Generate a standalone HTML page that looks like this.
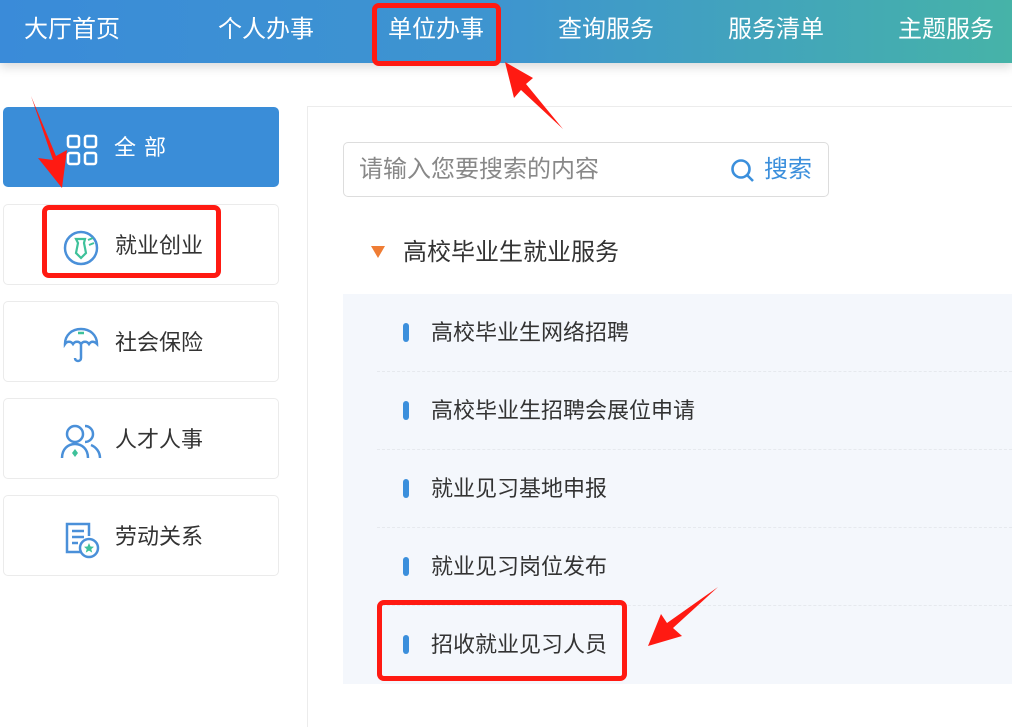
<!DOCTYPE html>
<html><head><meta charset="utf-8"><style>
body{margin:0;width:1012px;height:703px;overflow:hidden;background:#fff;font-family:"Liberation Sans","Noto Sans CJK SC",sans-serif;position:relative}
.hdr{position:absolute;left:0;top:0;width:1012px;height:63px;background:linear-gradient(90deg,#3a8bd9 0%,#3e95cf 50%,#46b3a8 100%);box-shadow:0 4px 10px rgba(0,0,0,.15)}
.nav{position:absolute;top:14px;color:#fff;font-size:24px;line-height:32px}
.card{position:absolute;left:3px;width:276px;height:81px;border:1px solid #ebebeb;border-radius:5px;box-sizing:border-box}
.card span{position:absolute;left:111px;top:26px;font-size:22px;color:#333;line-height:30px}
.card svg{position:absolute;left:58px;top:22px}
.all{background:#3a8dd8;border:none;top:107px;height:80px}
.all span{color:#fff;letter-spacing:8px}
.panel{position:absolute;left:307px;top:106px;width:720px;height:620px;border-left:1px solid #ececec;border-top:1px solid #ececec}
.search{position:absolute;left:343px;top:142px;width:486px;height:55px;border:1px solid #ddd;border-radius:5px;box-sizing:border-box}
.list{position:absolute;left:343px;top:294px;width:680px;height:390px;background:#f4f7fc}
.row{position:absolute;left:34px;width:650px;height:78px;border-bottom:1px dashed #e6e9ee;box-sizing:border-box}
.row i{position:absolute;left:26px;top:29px;width:6px;height:19px;background:#3b8fdc;border-radius:3px}
.row b{position:absolute;left:54px;top:24px;font-weight:normal;font-size:22px;color:#333;line-height:30px}
.red{position:absolute;border:5px solid #ff1a12;border-radius:7px;box-sizing:border-box}
</style></head><body>
<div class="hdr"></div>
<div class="nav" style="left:24px">大厅首页</div>
<div class="nav" style="left:218px">个人办事</div>
<div class="nav" style="left:388px">单位办事</div>
<div class="nav" style="left:558px">查询服务</div>
<div class="nav" style="left:728px">服务清单</div>
<div class="nav" style="left:898px">主题服务</div>

<div class="card all"><svg width="36" height="36" viewBox="0 0 36 36" style="left:62px;top:26px" fill="none" stroke="#fff" stroke-width="2.5"><rect x="3" y="3" width="11" height="11" rx="2"/><rect x="20" y="3" width="11" height="11" rx="2"/><rect x="3" y="20" width="11" height="11" rx="2"/><rect x="20" y="20" width="11" height="11" rx="2"/></svg><span>全部</span></div>
<div class="card" style="top:204px"><svg width="38" height="38" viewBox="0 0 38 38" style="top:24px"><circle cx="19" cy="19" r="16" fill="none" stroke="#4a90d9" stroke-width="2.5"/><path d="M14 10h9l-1 4 2 10-5 5-5-5 2-10z" fill="none" stroke="#3ec19a" stroke-width="2.2"/><path d="M26 11l5-2M27 16l5-2" stroke="#3ec19a" stroke-width="2"/></svg><span>就业创业</span></div>
<div class="card" style="top:301px"><svg width="38" height="40" viewBox="0 0 38 40" fill="none" stroke="#4a90d9" stroke-width="2.5" style="top:24px"><path d="M3 18C3 9 10 3 19 3s16 6 16 15c-3-3-6-3-8 0-2-3-6-3-8 0-2-3-6-3-8 0-2-3-6-3-8 0z"/><path d="M19 18v14c0 4-6 4-6 0"/><path d="M16 7h6" stroke="#3ec19a"/></svg><span>社会保险</span></div>
<div class="card" style="top:398px"><svg width="42" height="38" viewBox="0 0 42 38" fill="none" stroke="#4a90d9" stroke-width="2.5" style="left:56px;top:24px"><circle cx="15" cy="11" r="8"/><path d="M2 35c0-9 6-14 13-14s13 5 13 14"/><path d="M25 3a8 8 0 0 1 0 16M31 22c5 2 9 7 9 13"/><path d="M15 26l3 4-3 4-3-4z" fill="#3ec19a" stroke="none"/></svg><span>人才人事</span></div>
<div class="card" style="top:495px"><svg width="40" height="40" viewBox="0 0 40 40" fill="none" stroke="#4a90d9" stroke-width="2.5" style="top:24px"><path d="M20 32H5V4h22v12"/><path d="M10 11h12M10 17h12M10 23h6"/><circle cx="27" cy="28" r="9"/><path d="M27 23l1.5 3.5 3.5.3-2.7 2.3.9 3.5-3.2-2-3.2 2 .9-3.5-2.7-2.3 3.5-.3z" fill="#3ec19a" stroke="none"/></svg><span>劳动关系</span></div>

<div class="panel"></div>
<div class="search"><span style="position:absolute;left:15px;top:12px;font-size:24px;color:#888;line-height:30px">请输入您要搜索的内容</span>
<svg width="26" height="26" viewBox="0 0 26 26" style="position:absolute;left:386px;top:15px" fill="none" stroke="#3b8fdc" stroke-width="2.6"><circle cx="11" cy="11" r="8.5"/><path d="M17 17l6 6"/></svg>
<span style="position:absolute;left:420px;top:12px;font-size:24px;color:#3b8fdc;line-height:30px">搜索</span></div>
<svg width="14" height="12" style="position:absolute;left:371px;top:246px"><path d="M0 0h14L7 12z" fill="#ef7d35"/></svg>
<div style="position:absolute;left:403px;top:237px;font-size:24px;color:#333;line-height:32px">高校毕业生就业服务</div>
<div class="list">
<div class="row" style="top:0"><i></i><b>高校毕业生网络招聘</b></div>
<div class="row" style="top:78px"><i></i><b>高校毕业生招聘会展位申请</b></div>
<div class="row" style="top:156px"><i></i><b>就业见习基地申报</b></div>
<div class="row" style="top:234px"><i></i><b>就业见习岗位发布</b></div>
<div class="row" style="top:312px;border:none"><i></i><b>招收就业见习人员</b></div>
</div>

<div class="red" style="left:372px;top:3px;width:129px;height:63px"></div>
<div class="red" style="left:42px;top:205px;width:179px;height:73px"></div>
<div class="red" style="left:377px;top:600px;width:250px;height:81px"></div>
<svg width="1012" height="703" style="position:absolute;left:0;top:0">
<path d="M31 96L53 160 38 158 62 188 67 150 56 156z" fill="#ff1a12"/>
<path d="M505 62L514 98 521 90 563 129 526 84 533 78z" fill="#ff1a12"/>
<path d="M648 646L682 636 673 628 718 587 667 623 661 614z" fill="#ff1a12"/>
</svg>
</body></html>
